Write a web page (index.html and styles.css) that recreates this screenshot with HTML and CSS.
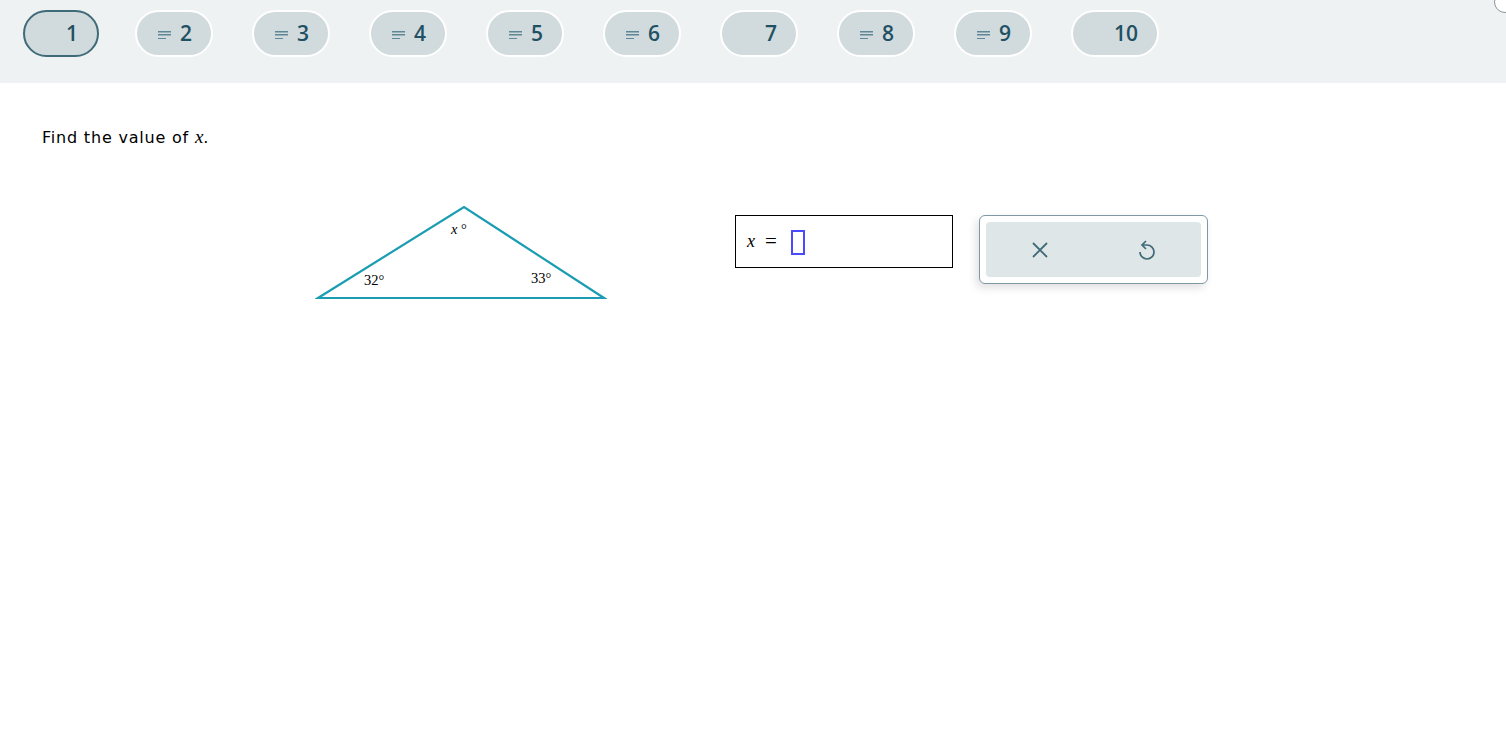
FILE: index.html
```html
<!DOCTYPE html>
<html lang="en">
<head>
  <meta charset="UTF-8" />
  <title>Find the value of x</title>
  <link rel="stylesheet" href="styles.css">
</head>
<body>
  <header class="topbar">
    <nav class="questions">
      <button class="pill current"><span class="lines blank"></span><span class="num">1</span></button>
      <button class="pill"><span class="lines"></span><span class="num">2</span></button>
      <button class="pill"><span class="lines"></span><span class="num">3</span></button>
      <button class="pill"><span class="lines"></span><span class="num">4</span></button>
      <button class="pill"><span class="lines"></span><span class="num">5</span></button>
      <button class="pill"><span class="lines"></span><span class="num">6</span></button>
      <button class="pill"><span class="lines blank"></span><span class="num">7</span></button>
      <button class="pill"><span class="lines"></span><span class="num">8</span></button>
      <button class="pill"><span class="lines"></span><span class="num">9</span></button>
      <button class="pill"><span class="lines blank"></span><span class="num">10</span></button>
    </nav>
    <span class="corner"></span>
  </header>

  <main class="question">
    <p class="prompt">Find the value of <i class="mvar">x</i>.</p>

    <div class="work">
      <svg class="figure" width="300" height="110" viewBox="0 0 300 110">
        <polygon points="3,99 149,8 289,99" fill="none" stroke="#1a9db3" stroke-width="2.2" stroke-linejoin="miter" />
        <text x="136" y="35" class="lbl"><tspan font-style="italic">x</tspan> °</text>
        <text x="49" y="86" class="lbl">32°</text>
        <text x="216" y="84" class="lbl">33°</text>
      </svg>

      <div class="answer">
        <i class="mvar">x</i><span class="eq">=</span><span class="slot"></span>
      </div>

      <div class="tools">
        <div class="tools-inner">
          <button class="tool" title="Clear">
            <svg width="18" height="18" viewBox="0 0 18 18"><path d="M2 2 L16 16 M16 2 L2 16" stroke="#3f6a78" stroke-width="1.8" fill="none" /></svg>
          </button>
          <button class="tool" title="Undo">
            <svg width="20" height="22" viewBox="0 0 20 22"><path d="M5 6 H10 A7 7 0 1 1 3 13" stroke="#3f6a78" stroke-width="1.7" fill="none" /><path d="M9 2 L5 6 L9 10" stroke="#3f6a78" stroke-width="1.7" fill="none" /></svg>
          </button>
        </div>
      </div>
    </div>
  </main>
</body>
</html>
```
FILE: styles.css
```css
html, body {
  margin: 0;
  background: #ffffff;
}

body {
  font-family: "DejaVu Sans", Verdana, sans-serif;
  color: #000;
}

.topbar {
  position: relative;
  height: 83px;
  background: #eef2f3;
  overflow: hidden;
}

.questions {
  display: flex;
  gap: 39px;
  padding: 10px 0 0 23px;
}

.pill {
  height: 47px;
  min-width: 78px;
  box-sizing: border-box;
  border: 2px solid #ffffff;
  border-radius: 24px;
  background: #d1dadd;
  display: flex;
  align-items: center;
  justify-content: flex-end;
  gap: 9px;
  padding: 0 19px 0 19px;
  font-family: "Open Sans", sans-serif;
  cursor: pointer;
}

.pill.current {
  border-color: #3f6a78;
  min-width: 75px;
  margin-right: -3px;
}

.num {
  font-size: 21px;
  font-weight: 600;
  color: #1f5163;
  line-height: 1;
}

.lines {
  width: 13px;
  height: 8px;
  background:
    linear-gradient(#5f8796, #5f8796) 0 0 / 13px 1.5px no-repeat,
    linear-gradient(#5f8796, #5f8796) 0 3px / 13px 1.5px no-repeat,
    linear-gradient(#5f8796, #5f8796) 0 6.5px / 8px 1.5px no-repeat;
  margin-top: 3px;
}

.lines.blank {
  background: none;
}

.corner {
  position: absolute;
  top: -9px;
  right: -10px;
  width: 20px;
  height: 20px;
  border: 1px solid #8a9599;
  border-radius: 50%;
  background: #fff;
}

.question {
  padding: 0 42px;
}

.prompt {
  margin: 43px 0 0;
  font-size: 16px;
  letter-spacing: 0.8px;
  font-family: "DejaVu Sans", Verdana, sans-serif;
}

.mvar {
  font-family: "Liberation Serif", "DejaVu Serif", serif;
  font-style: italic;
  font-size: 19px;
  letter-spacing: 0;
}

.work {
  display: flex;
  align-items: flex-start;
  margin-top: 50px;
}

.figure {
  margin-left: 273px;
  margin-top: 1px;
}

.lbl {
  font-family: "Liberation Serif", serif;
  font-size: 14.5px;
  fill: #000;
}

.answer {
  margin-left: 120px;
  margin-top: 17px;
  width: 218px;
  height: 53px;
  box-sizing: border-box;
  border: 1px solid #000;
  display: flex;
  align-items: center;
  padding-left: 11px;
  font-family: "Liberation Serif", serif;
}

.answer .mvar {
  font-size: 18px;
}

.eq {
  font-size: 21px;
  margin: 0 14px 0 10px;
}

.slot {
  width: 10px;
  height: 21px;
  border: 2px solid #4a4aff;
  margin-top: 1px;
}

.tools {
  margin-left: 26px;
  margin-top: 17px;
  width: 229px;
  height: 69px;
  box-sizing: border-box;
  border: 1px solid #7d9aa4;
  border-radius: 6px;
  background: #fff;
  padding: 6px;
  box-shadow: -3px 4px 8px rgba(0, 0, 0, 0.12);
}

.tools-inner {
  height: 100%;
  background: #dfe6e8;
  border-radius: 4px;
  display: flex;
}

.tool {
  flex: 1;
  border: none;
  background: none;
  display: flex;
  align-items: center;
  justify-content: center;
  cursor: pointer;
  padding: 0;
}
```
